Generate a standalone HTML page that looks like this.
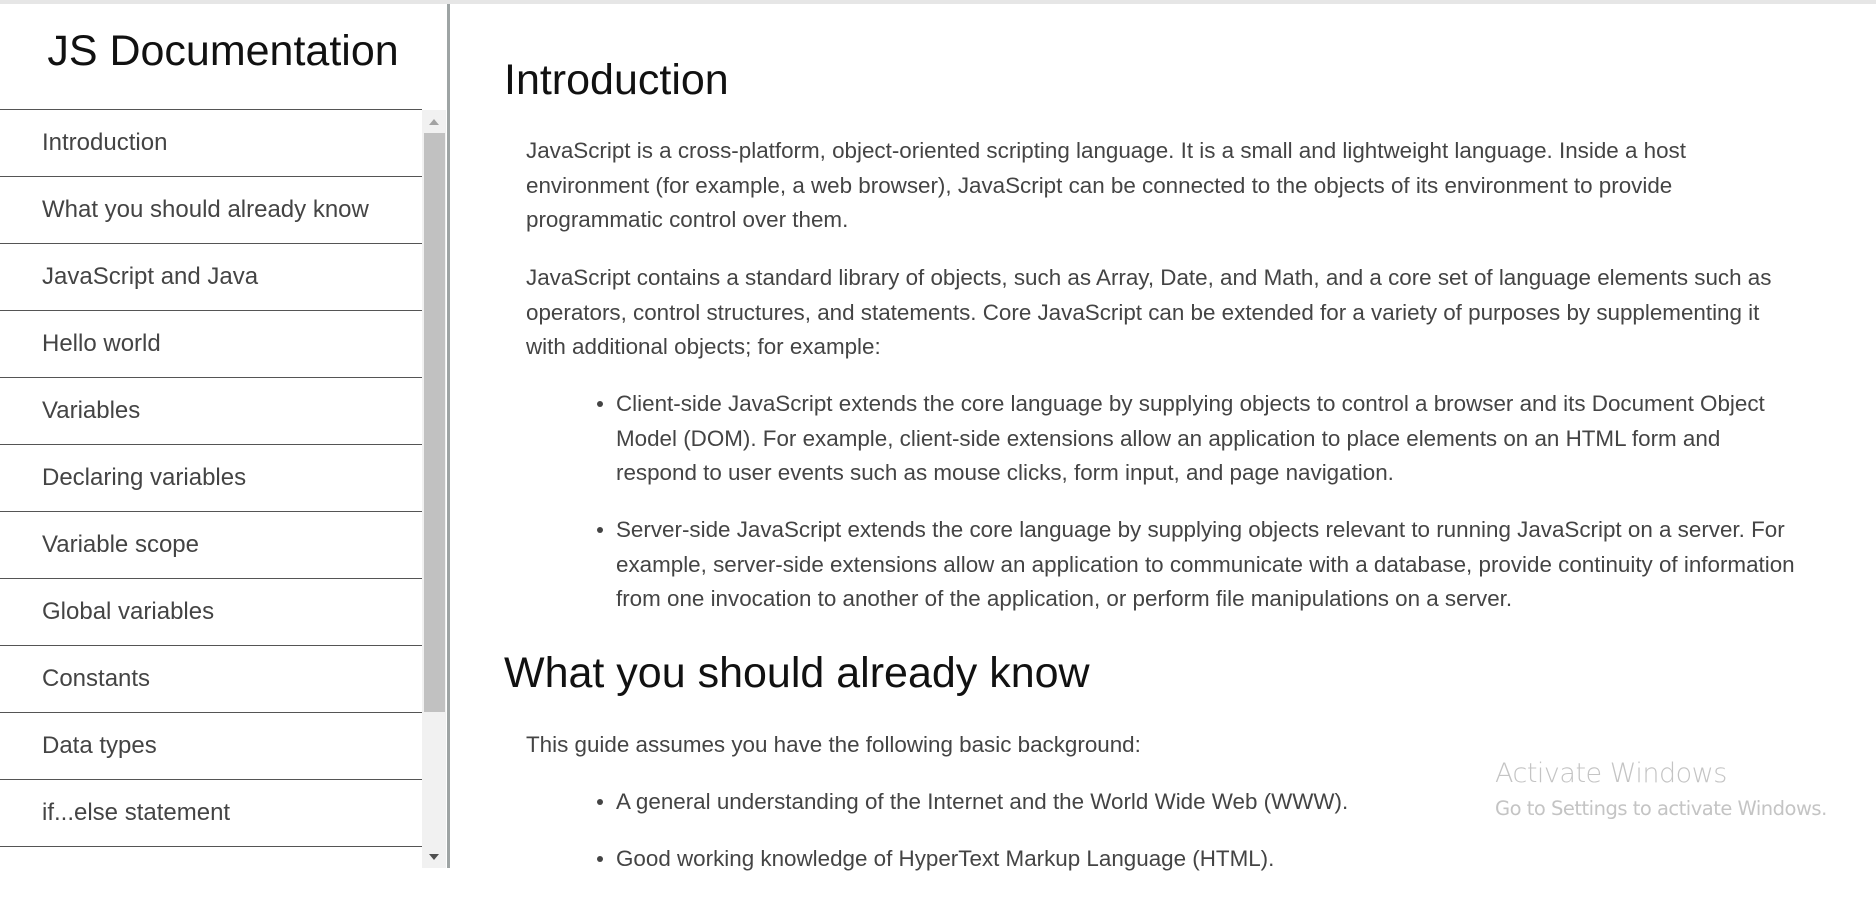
<!DOCTYPE html>
<html><head><meta charset="utf-8"><style>
*{margin:0;padding:0;box-sizing:border-box}
html,body{width:1876px;height:868px;overflow:hidden;background:#fff;font-family:"Liberation Sans",Arial,sans-serif}
.top{position:absolute;left:0;top:0;width:1876px;height:4px;background:#e6e6e6}
.sep{position:absolute;left:447px;top:4px;width:3px;height:864px;background:#9ea4a4}
.title{position:absolute;left:0;width:446px;top:27px;text-align:center;font-size:43px;color:#111}
.nav{position:absolute;left:0;top:109px;width:422px}
.nav div{height:67px;border-top:1.5px solid #555;font-size:24px;color:#444;padding-left:42px;line-height:66px}
.track{position:absolute;left:422px;top:110px;width:24px;height:758px;background:#f1f1f1}
.thumb{position:absolute;left:424px;top:133px;width:21px;height:579px;background:#c1c1c1}
.up{position:absolute;left:429px;top:119px;width:0;height:0;border-left:5px solid transparent;border-right:5px solid transparent;border-bottom:6px solid #a3a3a3}
.dn{position:absolute;left:429px;top:854px;width:0;height:0;border-left:5px solid transparent;border-right:5px solid transparent;border-top:6px solid #505050}
.h{position:absolute;left:504px;font-size:43px;color:#111;white-space:nowrap}
.p{position:absolute;left:526px;font-size:22.4px;color:#444;line-height:34.5px;white-space:nowrap}
.li{position:absolute;left:616px;font-size:22.4px;color:#444;line-height:34.5px;white-space:nowrap}
.li::before{content:"";position:absolute;left:-19px;top:14px;width:6px;height:6px;border-radius:50%;background:#444}
.aw{position:absolute;left:1495px;top:758px;font-size:27px;color:#c4c4c4;font-family:"DejaVu Sans","Liberation Sans",sans-serif;font-weight:300;letter-spacing:-0.5px}
.aw2{position:absolute;left:1495px;top:797px;font-size:19.5px;color:#c4c4c4;font-family:"DejaVu Sans","Liberation Sans",sans-serif;letter-spacing:-0.5px}
</style></head><body>
<div class="top"></div>
<div class="title">JS Documentation</div>
<div class="nav">
<div>Introduction</div><div>What you should already know</div><div>JavaScript and Java</div><div>Hello world</div><div>Variables</div><div>Declaring variables</div><div>Variable scope</div><div>Global variables</div><div>Constants</div><div>Data types</div><div>if...else statement</div><div></div>
</div>
<div class="track"></div><div class="thumb"></div><div class="up"></div><div class="dn"></div>
<div class="sep"></div>
<div class="h" style="top:56px">Introduction</div>
<div class="p" style="top:134px">JavaScript is a cross-platform, object-oriented scripting language. It is a small and lightweight language. Inside a host<br>environment (for example, a web browser), JavaScript can be connected to the objects of its environment to provide<br>programmatic control over them.</div>
<div class="p" style="top:261px">JavaScript contains a standard library of objects, such as Array, Date, and Math, and a core set of language elements such as<br>operators, control structures, and statements. Core JavaScript can be extended for a variety of purposes by supplementing it<br>with additional objects; for example:</div>
<div class="li" style="top:387px">Client-side JavaScript extends the core language by supplying objects to control a browser and its Document Object<br>Model (DOM). For example, client-side extensions allow an application to place elements on an HTML form and<br>respond to user events such as mouse clicks, form input, and page navigation.</div>
<div class="li" style="top:513px">Server-side JavaScript extends the core language by supplying objects relevant to running JavaScript on a server. For<br>example, server-side extensions allow an application to communicate with a database, provide continuity of information<br>from one invocation to another of the application, or perform file manipulations on a server.</div>
<div class="h" style="top:649px">What you should already know</div>
<div class="p" style="top:728px">This guide assumes you have the following basic background:</div>
<div class="li" style="top:785px">A general understanding of the Internet and the World Wide Web (WWW).</div>
<div class="li" style="top:842px">Good working knowledge of HyperText Markup Language (HTML).</div>
<div class="aw">Activate Windows</div>
<div class="aw2">Go to Settings to activate Windows.</div>
</body></html>
